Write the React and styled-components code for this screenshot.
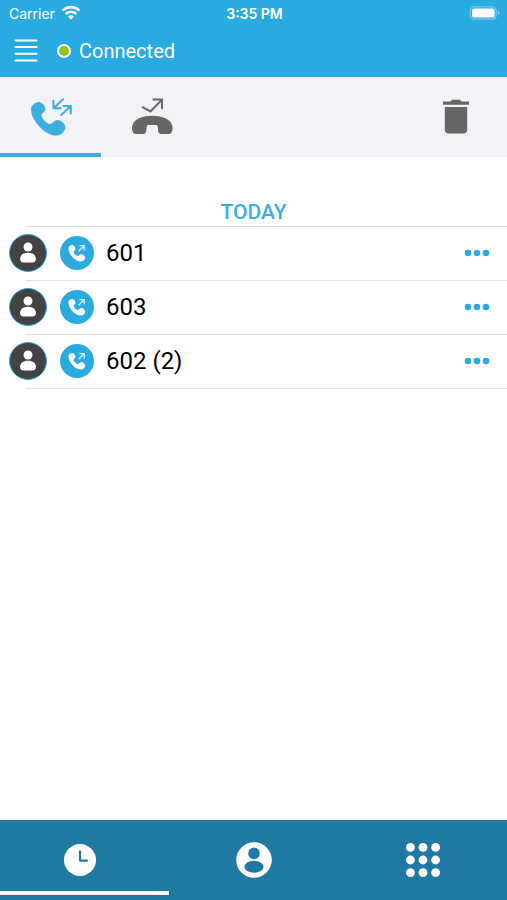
import React, { useState } from "react";
import styled, { createGlobalStyle } from "styled-components";

const primary = "#29abe2";
const primary_dark = "#1f79a2";
const icon_blue = "#3badde";
const icon_grey = "#666666";
const toolbar_bg = "#f2f2f7";
const divider = "#e1e1e3";

const calls = [
  { id: 1, number: "601" },
  { id: 2, number: "603" },
  { id: 3, number: "602 (2)" }
];

const WifiIcon = () => (
  <svg width="20" height="16" viewBox="0 0 20 16" fill="none" stroke="#fff">
    <path d="M1.6 5.6a12 12 0 0 1 16.8 0" strokeWidth="2.6" />
    <path d="M4.7 9a7.6 7.6 0 0 1 10.6 0" strokeWidth="2.5" />
    <path d="M10 14.8 7 11.6a4.3 4.3 0 0 1 6 0z" fill="#fff" stroke="none" />
  </svg>
);

const BatteryIcon = () => (
  <svg width="31" height="14" viewBox="0 0 31 14">
    <rect
      x="1.2"
      y="0.8"
      width="26"
      height="12.4"
      rx="4"
      fill="none"
      stroke="#fff"
      strokeOpacity="0.35"
      strokeWidth="1.2"
    />
    <rect x="3" y="2.4" width="22.6" height="9.2" rx="2.2" fill="#fff" />
    <path d="M28.8 4.8v4.4c1-.4 1.6-1.2 1.6-2.2s-.6-1.8-1.6-2.2z" fill="#fff" fillOpacity="0.35" />
  </svg>
);

const MenuIcon = () => (
  <svg width="24" height="24" viewBox="0 0 24 24" stroke="#fff" strokeWidth="2" strokeLinecap="round">
    <path d="M1.4 1.4h21.2M1.4 8h21.2M1.4 14.7h21.2M1.4 21.4h21.2" />
  </svg>
);

const AllCallsIcon = () => (
  <svg width="42" height="40" viewBox="0 0 42 40">
    <path
      d="M1 11.2C1 7.4 5.600 4 8.900 4c3.300 0 6.500 4 6.500 7.300 0 3-3.900 3.500-3.900 6.100 0 2.700 5.600 8.600 8.600 8.600 2.400 0 4-3.900 7.700-3.900 3.400 0 7.600 4.200 7.600 7.100 0 3.500-4.200 8.300-8.500 8.400C14.800 37.800 1 22 1 11.200z"
      fill={icon_blue}
    />
    <g fill="none" stroke={icon_blue} strokeWidth="2" strokeLinecap="round" strokeLinejoin="round">
      <path d="M33 1.200 23.400 10.200M23.400 2.800v7.400h7.400" />
      <path d="M31.200 17 40.800 8M33.400 8h7.400v7.600" />
    </g>
  </svg>
);

const MissedCallsIcon = () => (
  <svg width="42" height="40" viewBox="-1 0 42 40">
    <path
      d="M20.200 17.800C31 17.800 40.600 21.600 40.600 30.200c0 3.800-1.400 5.800-3.800 5.800h-7.200c-2.600 0-3.400-1.400-3.600-4-.2-3.200-.2-5-1.800-5h-8c-1.600 0-1.600 1.800-1.800 5-.2 2.600-1 4-3.600 4H4C1.600 36 0 34 0 30.200 0 21.600 9.400 17.800 20.200 17.800z"
      fill={icon_grey}
    />
    <path
      d="M10.600 9.200 18.400 13.400 30 1.600M21.400 1.600H30v8.600"
      fill="none"
      stroke={icon_grey}
      strokeWidth="2"
      strokeLinecap="round"
    />
  </svg>
);

const TrashIcon = () => (
  <svg width="28" height="38" viewBox="0 0 28 38" fill={icon_grey}>
    <path d="M1 2.600h7.600L10 .8h8l1.400 1.800H27v3.200H1z" />
    <path d="M2.800 8h22.400v22.600a4 4 0 0 1-4 4H6.800a4 4 0 0 1-4-4z" />
  </svg>
);

const PersonIcon = () => (
  <svg width="16" height="22" viewBox="0 0 16 22" fill="#fff">
    <circle cx="8" cy="5" r="4.500" />
    <path d="M.1 17c0-4 3.100-6.200 7.900-6.200s7.900 2.200 7.900 6.200c0 2.400-1.400 3.600-3.600 3.600H3.700C1.500 20.600.1 19.400.1 17z" />
  </svg>
);

const OutgoingIcon = () => (
  <svg width="34" height="34" viewBox="0 0 34 34">
    <path
      d="M8.400 12.200c0-1.900 2.500-3.300 3.900-3.200 1.600.1 3.100 2.200 3.200 3.600.1 1.700-1.900 2.200-1.900 3.300 0 1.500 2.800 4.100 4.400 4.100 1.200 0 1.700-1.900 3.300-1.900s3.900 2.100 3.900 3.700c0 1.800-1.900 3.800-4.300 3.800C15 25.600 8.400 18 8.400 12.200z"
      fill="#fff"
    />
    <path
      d="M18.600 15.200 24 9.800M19.400 9.600h4.800v4.800"
      fill="none"
      stroke="#d3eefa"
      strokeWidth="1.300"
    />
  </svg>
);

const DotsIcon = () => (
  <svg width="26" height="8" viewBox="0 0 26 8" fill={primary}>
    <circle cx="4" cy="4" r="3.300" />
    <circle cx="13" cy="4" r="3.300" />
    <circle cx="22" cy="4" r="3.300" />
  </svg>
);

const ClockIcon = () => (
  <svg width="32" height="32" viewBox="0 0 32 32">
    <circle cx="16" cy="16" r="16" fill="#fff" />
    <path
      d="M16 7.400v9.200h7"
      fill="none"
      stroke={primary_dark}
      strokeWidth="2.200"
      strokeLinecap="round"
      strokeLinejoin="round"
    />
  </svg>
);

const ContactIcon = () => (
  <svg width="36" height="36" viewBox="0 0 36 36">
    <circle cx="18" cy="18" r="17.800" fill="#fff" />
    <circle cx="18" cy="11.400" r="5.800" fill={primary_dark} />
    <ellipse cx="18" cy="24.800" rx="9.600" ry="6" fill={primary_dark} />
  </svg>
);

const KeypadIcon = () => (
  <svg width="36" height="36" viewBox="0 0 36 36" fill="#fff">
    {[5.4, 18, 30.6].map(y =>
      [5.4, 18, 30.6].map(x => <circle key={`${x}-${y}`} cx={x} cy={y} r="4.400" />)
    )}
  </svg>
);

const App = () => {
  const [filter, setFilter] = useState("all");
  const [page, setPage] = useState("recents");

  return (
    <StyledApp>
      <GlobalStyle />
      <Header>
        <StatusBar>
          <Carrier>
            Carrier
            <WifiIcon />
          </Carrier>
          <Time>3:35 PM</Time>
          <BatteryIcon />
        </StatusBar>
        <TitleBar>
          <IconButton aria-label="Menu">
            <MenuIcon />
          </IconButton>
          <StatusDot />
          <h1>Connected</h1>
        </TitleBar>
      </Header>

      <Toolbar>
        <FilterTab
          aria-label="All calls"
          $active={filter === "all"}
          onClick={() => setFilter("all")}
        >
          <AllCallsIcon />
        </FilterTab>
        <FilterTab
          aria-label="Missed calls"
          $active={filter === "missed"}
          onClick={() => setFilter("missed")}
        >
          <MissedCallsIcon />
        </FilterTab>
        <DeleteButton aria-label="Delete">
          <TrashIcon />
        </DeleteButton>
      </Toolbar>

      <Main>
        <h2>TODAY</h2>
        <CallList>
          {calls.map(call => (
            <CallRow key={call.id}>
              <Avatar>
                <PersonIcon />
              </Avatar>
              <CallType>
                <OutgoingIcon />
              </CallType>
              <CallNumber>{call.number}</CallNumber>
              <IconButton aria-label="More">
                <DotsIcon />
              </IconButton>
            </CallRow>
          ))}
        </CallList>
      </Main>

      <BottomNav>
        <NavTab
          aria-label="Recents"
          $active={page === "recents"}
          $shift="10px"
          onClick={() => setPage("recents")}
        >
          <ClockIcon />
        </NavTab>
        <NavTab
          aria-label="Contacts"
          $active={page === "contacts"}
          onClick={() => setPage("contacts")}
        >
          <ContactIcon />
        </NavTab>
        <NavTab
          aria-label="Keypad"
          $active={page === "keypad"}
          onClick={() => setPage("keypad")}
        >
          <KeypadIcon />
        </NavTab>
      </BottomNav>
    </StyledApp>
  );
};

const GlobalStyle = createGlobalStyle`
  * {
    box-sizing: border-box;
  }

  body {
    margin: 0;
    background: #fff;
    font-family: Roboto, sans-serif;
  }

  h1, h2, ul {
    margin: 0;
    padding: 0;
  }

  button {
    padding: 0;
    border: 0;
    background: none;
    cursor: pointer;
  }

  svg {
    display: block;
  }
`;

const StyledApp = styled.div`
  display: flex;
  flex-direction: column;
  min-height: 100vh;
`;

const Header = styled.header`
  background: ${primary};
  color: #fff;
`;

const StatusBar = styled.div`
  display: grid;
  grid-template-columns: 1fr auto 1fr;
  align-items: center;
  height: 26px;
  padding: 0 7px 0 9px;
  font-family: Inter, sans-serif;
  font-size: 14px;

  > svg {
    justify-self: end;
  }
`;

const Carrier = styled.div`
  display: flex;
  align-items: center;
  gap: 6px;
`;

const Time = styled.span`
  font-weight: 600;
`;

const TitleBar = styled.div`
  display: flex;
  align-items: center;
  height: 51px;
  padding: 0 14px 2px;

  h1 {
    margin-left: 8px;
    font-size: 20px;
    font-weight: 400;
  }
`;

const IconButton = styled.button`
  display: flex;
  align-items: center;
  justify-content: center;
`;

const StatusDot = styled.span`
  width: 14px;
  height: 14px;
  margin-left: 19px;
  border: 2px solid #fff;
  border-radius: 50%;
  background: #95c11f;
`;

const Toolbar = styled.div`
  display: flex;
  height: 80px;
  background: ${toolbar_bg};
`;

const FilterTab = styled.button`
  display: flex;
  align-items: center;
  justify-content: center;
  flex-basis: 20%;
  padding-top: 6px;
  border-bottom: 4px solid ${props => (props.$active ? icon_blue : "transparent")};
`;

const DeleteButton = styled(FilterTab)`
  margin-left: auto;
`;

const Main = styled.main`
  flex: 1;
  padding-top: 42px;

  h2 {
    color: ${icon_blue};
    font-size: 21px;
    font-weight: 500;
    line-height: 27px;
    text-align: center;
  }
`;

const CallList = styled.ul`
  margin-left: 26px;
  border-top: 1px solid ${divider};
  list-style: none;
`;

const CallRow = styled.li`
  display: flex;
  align-items: center;
  height: 54px;
  padding-right: 17px;
  padding-bottom: 1px;
  border-bottom: 1px solid ${divider};
`;

const Round = styled.span`
  display: flex;
  align-items: center;
  justify-content: center;
  border-radius: 50%;
`;

/* hangs over the start of the divider */
const Avatar = styled(Round)`
  width: 38px;
  height: 38px;
  margin-left: -17px;
  border: 1px solid ${primary};
  background: #434343;
`;

const CallType = styled(Round)`
  width: 34px;
  height: 34px;
  margin-left: 13px;
  background: ${primary};
`;

const CallNumber = styled.span`
  flex: 1;
  margin-left: 12px;
  color: #000;
  font-size: 24px;
`;

const BottomNav = styled.nav`
  display: grid;
  grid-template-columns: repeat(3, 1fr);
  height: 80px;
  padding-bottom: 5px;
  background: ${primary_dark};
`;

const NavTab = styled.button`
  display: flex;
  align-items: center;
  justify-content: center;
  padding-top: 8px;
  padding-right: ${props => props.$shift || 0};
  border-bottom: 4px solid ${props => (props.$active ? "#fff" : "transparent")};
`;

export default App;
